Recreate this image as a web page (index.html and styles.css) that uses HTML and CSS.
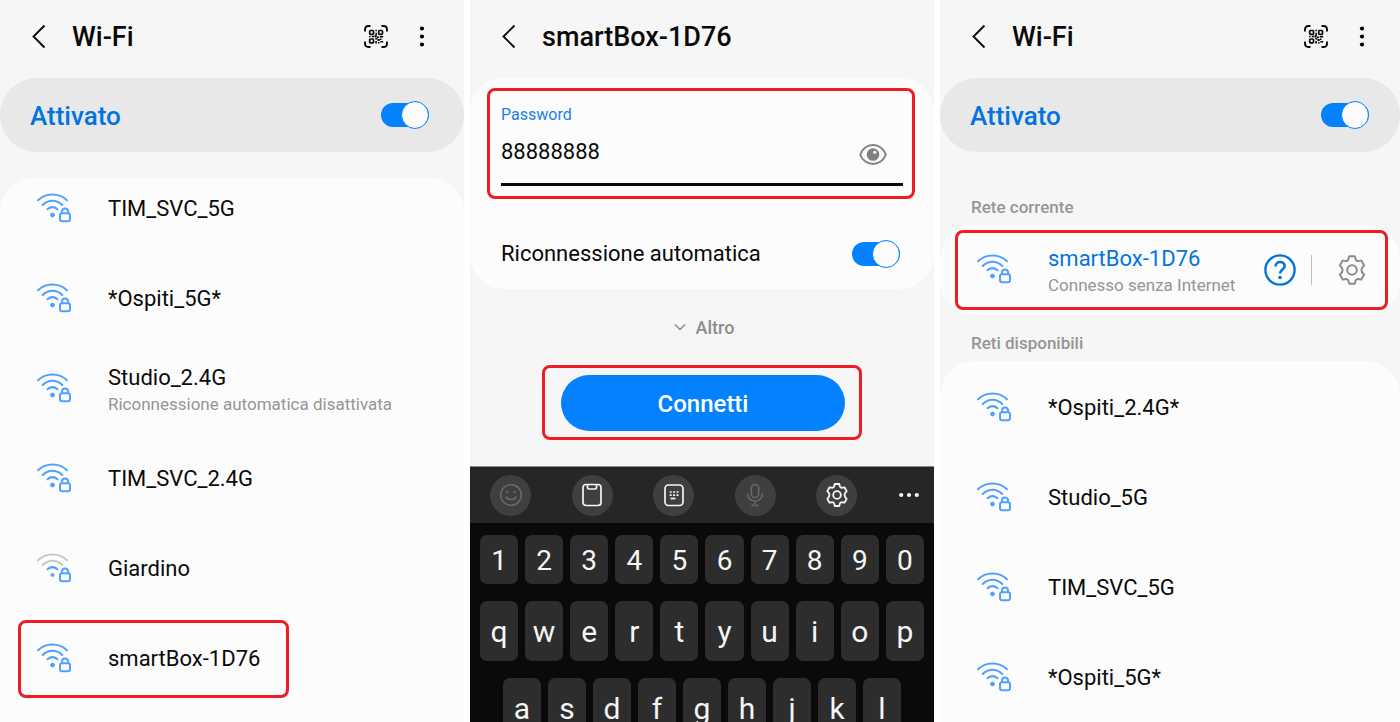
FILE: index.html
```html
<!DOCTYPE html>
<html lang="it">
<head>
  <meta charset="UTF-8" />
  <meta name="viewport" content="width=device-width, initial-scale=1.0" />
  <title>Connessione Wi-Fi smartBox</title>
  <link rel="stylesheet" href="styles.css">
</head>
<body>

  <!-- Icone condivise -->
  <svg class="sprite" aria-hidden="true">
    <symbol id="i-back" viewBox="0 0 14 26">
      <path d="M12.500 1.500L1.500 12.500l11 11" fill="none" stroke="currentColor" stroke-width="1.900" />
    </symbol>
    <symbol id="i-more" viewBox="0 0 6 24">
      <circle cx="3" cy="3.500" r="2.100" /><circle cx="3" cy="11.500" r="2.100" /><circle cx="3" cy="19.500" r="2.100" />
    </symbol>
    <symbol id="i-qr" viewBox="0 0 24 24">
      <path d="M1 6.500V4.500Q1 1 4.500 1H6.500M17.500 1h2Q23 1 23 4.500v2M23 16.500v2Q23 22 19.500 22h-2M6.500 22h-2Q1 22 1 18.500v-2" fill="none" stroke="currentColor" stroke-width="1.900" />
      <g fill="none" stroke="currentColor" stroke-width="1.700">
        <rect x="5.700" y="5.500" width="3.800" height="3.800" rx=".8" />
        <rect x="14.700" y="5.500" width="3.800" height="3.800" rx=".8" />
        <rect x="5.700" y="14" width="3.800" height="3.800" rx=".8" />
      </g>
      <path d="M11.400 4.700h1.500v1.500h-1.500zM11.400 7.700h1.500v2.500h-1.500zM5 11h1.500v1.300H5zM7.800 10.800h2.200v1.500h-2.200zM10.500 10.300h2.200v2.200h-2.200zM13 11.500h2.200v1.600H13zM16 11h3.200v1.400H16zM11.300 13h2v1.600h-2zM13.500 14h2.200v1.900h-2.200zM16 13.500h1.500V15H16zM11.300 16h1.600v2.500h-1.600zM14 17h1.500v1.500H14zM16.300 16h2.900v1.500h-2.900z" />
    </symbol>
    <symbol id="i-wifi" viewBox="0 0 36 32">
      <g fill="none" stroke-width="2" stroke-linecap="round">
        <path class="wave" d="M2 7.200C10 -.5 23 -.5 31 7.200" />
        <path class="wave" d="M6.700 12C12.500 6.200 20.500 6.200 26.300 12" />
        <path stroke="#4fa0ff" d="M11.500 16.300Q16.500 12 21.500 16.300" />
        <rect stroke="#4fa0ff" x="24" y="20.200" width="10" height="8" rx="2" />
        <path stroke="#4fa0ff" d="M26 20v-1.500a3 3 0 0 1 6 0v1.500" />
      </g>
      <circle cx="16.500" cy="22" r="1.900" fill="#4fa0ff" />
    </symbol>
    <symbol id="i-gear" viewBox="0 0 30 30">
      <g fill="none" stroke="currentColor" stroke-linejoin="round">
        <path d="M12.200 1.300h5.600q.8 3.700 1.700 4.300 1.200.8 4.800-.2l2.800 4.800q-2.700 2.700-2.700 4.800t2.700 4.800l-2.800 4.800q-3.600-1-4.800-.2-.9.600-1.700 4.300h-5.600q-.8-3.700-1.700-4.300-1.200-.8-4.800.2l-2.800-4.800q2.700-2.700 2.700-4.800t-2.700-4.800l2.800-4.800q3.600 1 4.800.2.900-.6 1.700-4.300z" />
        <circle cx="15" cy="15" r="4.800" />
      </g>
    </symbol>
  </svg>

  <main class="screens">

    <!-- 1. Elenco delle reti -->
    <section class="screen">
      <header class="topbar">
        <button class="icon-btn" aria-label="Indietro"><svg class="back"><use href="#i-back" /></svg></button>
        <h1>Wi-Fi</h1>
        <button class="icon-btn" aria-label="Codice QR"><svg class="qr"><use href="#i-qr" /></svg></button>
        <button class="icon-btn" aria-label="Altre opzioni"><svg class="more"><use href="#i-more" /></svg></button>
      </header>

      <div class="power">
        <label for="wifi1">Attivato</label>
        <input type="checkbox" class="switch" id="wifi1" checked />
      </div>

      <div class="card card-list">
        <ul class="networks scrolled">
          <li><svg class="wifi"><use href="#i-wifi" /></svg><div class="name">TIM_SVC_5G</div></li>
          <li><svg class="wifi"><use href="#i-wifi" /></svg><div class="name">*Ospiti_5G*</div></li>
          <li>
            <svg class="wifi"><use href="#i-wifi" /></svg>
            <div class="name double">Studio_2.4G<small>Riconnessione automatica disattivata</small></div>
          </li>
          <li><svg class="wifi"><use href="#i-wifi" /></svg><div class="name">TIM_SVC_2.4G</div></li>
          <li><svg class="wifi weak"><use href="#i-wifi" /></svg><div class="name">Giardino</div></li>
          <li class="marked"><svg class="wifi"><use href="#i-wifi" /></svg><div class="name">smartBox-1D76</div></li>
        </ul>
      </div>
    </section>

    <!-- 2. Inserimento della password -->
    <section class="screen">
      <header class="topbar">
        <button class="icon-btn" aria-label="Indietro"><svg class="back"><use href="#i-back" /></svg></button>
        <h1>smartBox-1D76</h1>
      </header>

      <div class="card">
        <div class="field">
          <label for="password">Password</label>
          <div class="field-line">
            <input type="text" id="password" value="88888888" />
            <button class="icon-btn" aria-label="Mostra password">
              <svg class="eye" viewBox="0 0 28 22">
                <path d="M1.200 11.500C3 6 8 2 14 2s11 4 12.800 9.500C25 17 20 21 14 21S3 17 1.200 11.500z" fill="none" stroke="currentColor" stroke-width="1.900" />
                <circle cx="14" cy="11.500" r="6.300" fill="currentColor" />
                <circle cx="15.800" cy="9.300" r="1.600" fill="#fcfcfc" />
              </svg>
            </button>
          </div>
        </div>
        <div class="option">
          <label for="auto">Riconnessione automatica</label>
          <input type="checkbox" class="switch" id="auto" checked />
        </div>
      </div>

      <button class="expand">
        <svg viewBox="0 0 12 8"><path d="M1 1.500l5 5 5-5" fill="none" stroke="currentColor" stroke-width="1.500" /></svg>
        Altro
      </button>

      <div class="connect">
        <button class="connect-btn">Connetti</button>
      </div>

      <div class="keyboard">
        <div class="tools">
          <button class="tool off" aria-label="Emoji">
            <svg viewBox="0 0 24 24" fill="none" stroke="currentColor" stroke-width="1.700">
              <circle cx="12" cy="12" r="10.300" />
              <path d="M7 13.500c1 4 9 4 10 0" stroke-width="2" />
              <circle cx="8.300" cy="9" r="1.300" fill="currentColor" stroke="none" /><circle cx="15.700" cy="9" r="1.300" fill="currentColor" stroke="none" />
            </svg>
          </button>
          <button class="tool" aria-label="Appunti">
            <svg viewBox="0 0 24 24" fill="none" stroke="currentColor" stroke-width="1.700">
              <rect x="3" y="1.500" width="18" height="21" rx="3" />
              <path d="M7.500 1.500v3q0 1.500 1.500 1.500h6q1.500 0 1.500-1.500v-3" />
            </svg>
          </button>
          <button class="tool" aria-label="Modalità tastiera">
            <svg viewBox="0 0 24 24" fill="none" stroke="currentColor" stroke-width="1.700">
              <rect x="3" y="2" width="18" height="20.500" rx="3.500" />
              <path d="M7.700 9h8.800M7.700 12.200h8.800" stroke-dasharray="2 1.400" />
              <path d="M8.500 15.500h5" />
            </svg>
          </button>
          <button class="tool off" aria-label="Dettatura">
            <svg viewBox="0 0 24 24" fill="none" stroke="currentColor" stroke-width="1.700">
              <rect x="8.300" y="1.500" width="7.400" height="13" rx="3.700" />
              <path d="M4.500 10.500c0 10 15 10 15 0M12 18v3M8.500 22.300h7" />
            </svg>
          </button>
          <button class="tool" aria-label="Impostazioni tastiera"><svg stroke-width="2.300"><use href="#i-gear" /></svg></button>
          <button class="tool plain" aria-label="Altro">
            <svg viewBox="0 0 24 24" fill="currentColor"><circle cx="3.500" cy="12" r="2.300" /><circle cx="12" cy="12" r="2.300" /><circle cx="20.500" cy="12" r="2.300" /></svg>
          </button>
        </div>
        <div class="keys">
          <div class="key-row digits">
            <button>1</button><button>2</button><button>3</button><button>4</button><button>5</button><button>6</button><button>7</button><button>8</button><button>9</button><button>0</button>
          </div>
          <div class="key-row">
            <button>q</button><button>w</button><button>e</button><button>r</button><button>t</button><button>y</button><button>u</button><button>i</button><button>o</button><button>p</button>
          </div>
          <div class="key-row inset">
            <button>a</button><button>s</button><button>d</button><button>f</button><button>g</button><button>h</button><button>j</button><button>k</button><button>l</button>
          </div>
        </div>
      </div>
    </section>

    <!-- 3. Rete collegata -->
    <section class="screen narrow">
      <header class="topbar">
        <button class="icon-btn" aria-label="Indietro"><svg class="back"><use href="#i-back" /></svg></button>
        <h1>Wi-Fi</h1>
        <button class="icon-btn" aria-label="Codice QR"><svg class="qr"><use href="#i-qr" /></svg></button>
        <button class="icon-btn" aria-label="Altre opzioni"><svg class="more"><use href="#i-more" /></svg></button>
      </header>

      <div class="power">
        <label for="wifi3">Attivato</label>
        <input type="checkbox" class="switch" id="wifi3" checked />
      </div>

      <h2 class="first">Rete corrente</h2>
      <div class="card">
        <ul class="networks">
          <li class="marked current">
            <svg class="wifi"><use href="#i-wifi" /></svg>
            <div class="name double">smartBox-1D76<small>Connesso senza Internet</small></div>
            <button class="icon-btn" aria-label="Aiuto">
              <svg class="help" viewBox="0 0 32 32">
                <g fill="none" stroke="currentColor" stroke-width="2.400">
                  <circle cx="16" cy="16" r="14.600" />
                  <path d="M11.500 12.500c0-6 9.200-5.700 9.200-.5 0 3.300-4.600 3.700-4.600 7.500" stroke-width="2.600" />
                </g>
                <circle cx="16" cy="23.500" r="1.800" fill="currentColor" />
              </svg>
            </button>
            <span class="divider"></span>
            <button class="icon-btn" aria-label="Impostazioni rete"><svg class="gear"><use href="#i-gear" /></svg></button>
          </li>
        </ul>
      </div>

      <h2>Reti disponibili</h2>
      <div class="card card-list">
        <ul class="networks">
          <li><svg class="wifi"><use href="#i-wifi" /></svg><div class="name">*Ospiti_2.4G*</div></li>
          <li><svg class="wifi"><use href="#i-wifi" /></svg><div class="name">Studio_5G</div></li>
          <li><svg class="wifi"><use href="#i-wifi" /></svg><div class="name">TIM_SVC_5G</div></li>
          <li><svg class="wifi"><use href="#i-wifi" /></svg><div class="name">*Ospiti_5G*</div></li>
        </ul>
      </div>
    </section>

  </main>

</body>
</html>
```
FILE: styles.css
```css
:root {
  --sfondo: #f6f6f6;
  --scheda: #fcfcfc;
  --blu: #0381fe;
  --blu-testo: #0374de;
  --grigio: #959595;
  --rosso: #ee1c25;
}

*, *::before, *::after {
  box-sizing: border-box;
}

body {
  margin: 0;
  background: #fff;
  color: #0a0a0a;
  font-family: Roboto, sans-serif;
  font-size: 22px;
}

button, input {
  font-family: inherit;
  color: inherit;
}

button {
  border: none;
  cursor: pointer;
}

svg {
  display: block;
}

.sprite {
  position: absolute;
  width: 0;
  height: 0;
}

.screens {
  display: grid;
  grid-template-columns: 464fr 464fr 460fr;
  gap: 6px;
  height: 100vh;
  overflow: hidden;
}

.screen {
  display: flex;
  flex-direction: column;
  min-width: 0;
  min-height: 0;
  overflow: hidden;
  background: var(--sfondo);
}

.screen > * {
  flex-shrink: 0;
}

/* Barra superiore */
.topbar {
  display: flex;
  align-items: center;
  height: 78px;
  padding: 0 39px 4px 32px;
}

.narrow .topbar {
  padding-right: 35px;
}

.topbar h1 {
  flex: 1;
  margin: 0 0 0 26px;
  font-size: 27px;
  font-weight: 500;
  line-height: 30px;
}

.icon-btn {
  padding: 0;
  background: none;
}

.back {
  width: 14px;
  height: 26px;
}

.qr {
  width: 24px;
  height: 24px;
  margin-right: 31px;
}

.more {
  width: 6px;
  height: 24px;
}

/* Interruttori */
.power {
  display: flex;
  align-items: center;
  justify-content: space-between;
  height: 74px;
  padding: 0 35px 0 30px;
  border-radius: 37px;
  background: #e8e8e8;
  color: var(--blu-testo);
  font-size: 26px;
  font-weight: 500;
}

.narrow .power {
  padding-right: 31px;
}

.power label {
  padding-top: 2px;
}

.switch {
  appearance: none;
  display: flex;
  align-items: center;
  justify-content: flex-end;
  width: 48px;
  height: 24px;
  margin: 0;
  border-radius: 12px;
  background: var(--blu);
  cursor: pointer;
}

.switch::before {
  content: "";
  flex: none;
  width: 28px;
  height: 28px;
  border: 1px solid var(--blu);
  border-radius: 50%;
  background: var(--scheda);
}

.switch:not(:checked) {
  justify-content: flex-start;
  background: #b5b5b5;
}

/* Schede ed elenchi */
.card {
  border-radius: 34px;
  background: var(--scheda);
}

.card-list {
  flex: 1 0 auto;
  padding-top: 2px;
  border-radius: 34px 34px 0 0;
  overflow: hidden;
}

.power + .card-list {
  margin-top: 26px;
}

.networks {
  margin: 0;
  padding: 0;
  list-style: none;
}

.networks.scrolled {
  margin-top: -16px;
}

.networks li {
  position: relative;
  display: flex;
  align-items: center;
  height: 90px;
  padding: 0 33px 0 36px;
}

.wifi {
  flex: none;
  width: 36px;
  height: 32px;
  margin-right: 36px;
  stroke: #4fa0ff;
}

.wifi.weak {
  stroke: #c8c8c8;
}

.name {
  flex: 1;
  line-height: 26px;
}

.name.double {
  padding-top: 4px;
}

.name small {
  display: block;
  color: var(--grigio);
  font-size: 17px;
}

.current .name {
  color: var(--blu-testo);
}

.help {
  width: 32px;
  height: 32px;
  color: var(--blu-testo);
}

.divider {
  width: 1px;
  height: 30px;
  margin: 0 25px 0 15px;
  background: #c0c0c0;
}

.gear {
  width: 30px;
  height: 30px;
  color: #8c8c8c;
  stroke-width: 2;
}

/* Riquadri rossi di evidenziazione */
.marked::after {
  content: "";
  position: absolute;
  top: 6px;
  left: 18px;
  width: 271px;
  height: 78px;
  border: 3px solid var(--rosso);
  border-radius: 8px;
  pointer-events: none;
}

.marked.current::after {
  top: 5px;
  right: 12px;
  left: 15px;
  width: auto;
  height: 80px;
}

h2 {
  margin: 18px 0 0 31px;
  padding-bottom: 8px;
  color: var(--grigio);
  font-size: 17px;
  font-weight: 500;
  line-height: 20px;
}

h2.first {
  margin-top: 45px;
}

/* Password */
.field {
  height: 111px;
  margin: 10px 19px 0 17px;
  padding: 14px 9px 0 11px;
  border: 3px solid var(--rosso);
  border-radius: 8px;
}

.field label {
  display: block;
  color: #1a80e6;
  font-size: 16px;
  line-height: 20px;
}

.field-line {
  display: flex;
  align-items: center;
  height: 61px;
  padding-right: 16px;
  border-bottom: 3px solid #0a0a0a;
}

.field-line input {
  flex: 1;
  min-width: 0;
  height: 50px;
  padding: 0 0 6px;
  border: none;
  outline: none;
  background: none;
  font-size: 22px;
}

.eye {
  width: 28px;
  height: 22px;
  color: #808080;
}

.option {
  display: flex;
  align-items: center;
  justify-content: space-between;
  height: 90px;
  padding: 19px 34px 0 31px;
}

.expand {
  display: flex;
  align-items: center;
  justify-content: center;
  gap: 10px;
  height: 76px;
  padding: 0 0 0 4px;
  background: none;
  color: #8c8c8c;
  font-size: 18px;
  font-weight: 500;
}

.expand svg {
  width: 12px;
  height: 8px;
}

.connect {
  align-self: center;
  width: 69%;
  margin-bottom: 26px;
  padding: 7px 14px 6px 16px;
  border: 3px solid var(--rosso);
  border-radius: 8px;
}

.connect-btn {
  display: block;
  width: 100%;
  height: 56px;
  padding: 2px 0 0;
  border-radius: 28px;
  background: var(--blu);
  color: #fff;
  font-size: 24px;
  font-weight: 500;
}

/* Tastiera */
.keyboard {
  border-top: 1px solid #8a8a8a;
  background: #0a0a0a;
  color: #f5f5f5;
}

.tools {
  display: flex;
  align-items: center;
  justify-content: space-between;
  height: 56px;
  padding: 0 18px 0 20px;
  background: #262626;
}

.tool {
  display: grid;
  place-items: center;
  width: 41px;
  height: 41px;
  padding: 0;
  border-radius: 50%;
  background: #3f3f3f;
}

.tool.off {
  color: #656565;
}

.tool svg {
  width: 24px;
  height: 24px;
}

.tool.plain {
  width: 18px;
  background: none;
}

.tool.plain svg {
  width: 22px;
}

.keys {
  display: flex;
  flex-direction: column;
  gap: 17px;
  padding: 12px 10px;
}

.key-row {
  display: flex;
  gap: 7px;
}

.key-row.inset {
  padding: 0 23px;
}

.key-row button {
  flex: 1;
  height: 60px;
  padding: 0;
  border-radius: 7px;
  background: #2d2d2d;
  font-size: 30px;
}

.key-row.digits button {
  height: 49px;
  padding-top: 2px;
  font-size: 28px;
}
```
